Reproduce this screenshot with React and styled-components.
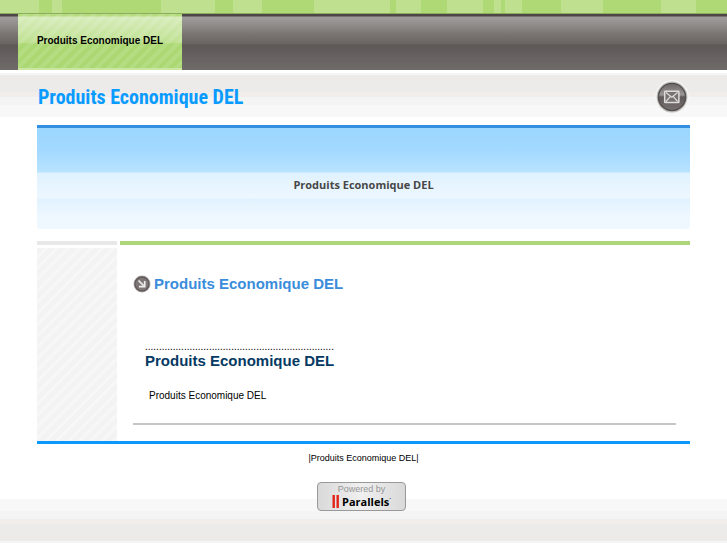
import styled, { createGlobalStyle } from "styled-components";

const siteName = "Produits Economique DEL";
const stripes = [
    [39, 1], [13, 0], [10, 1], [99, 0], [54, 1], [18, 0], [29, 1], [52, 0],
    [76, 1], [6, 0], [25, 1], [26, 0], [36, 1], [11, 0], [7, 1], [4, 0],
    [17, 1], [39, 0], [42, 1], [58, 0], [35, 1], [31, 0],
];

const App = () => {
    return (
        <>
            <GlobalStyle />
            <TopStripes>
                {stripes.map(([size, light], key) => (
                    <Stripe key={key} $size={size} $light={light} />
                ))}
            </TopStripes>
            <Nav>
                <NavLink href="#">{siteName}</NavLink>
            </Nav>
            <Header>
                <SiteTitle>{siteName}</SiteTitle>
                <MailLink href="#contact" aria-label="Contact">
                    <MailIcon />
                </MailLink>
            </Header>
            <Page>
                <Banner>{siteName}</Banner>
                <Columns>
                    <Side />
                    <Content>
                        <PageTitle>
                            <ArrowIcon />
                            {siteName}
                        </PageTitle>
                        <Article>
                            <Dots aria-hidden="true">{".".repeat(68)}</Dots>
                            <ArticleTitle>{siteName}</ArticleTitle>
                            <Text>{siteName}</Text>
                        </Article>
                        <Rule />
                    </Content>
                </Columns>
            </Page>
            <Footer>
                <FooterNav>
                    |<a href="#">{siteName}</a>|
                </FooterNav>
                <Powered href="#parallels">
                    <small>Powered by</small>
                    <Brand>
                        <Bars />
                        Parallels
                        <sup>·</sup>
                    </Brand>
                </Powered>
            </Footer>
        </>
    );
};

const MailIcon = () => (
    <svg width="34" height="34" viewBox="0 0 34 34" aria-hidden="true">
        <defs>
            <linearGradient id="mail" x1="0" y1="0" x2="0" y2="1">
                <stop offset="0" stopColor="#6b6665" />
                <stop offset="0.42" stopColor="#9a9796" />
                <stop offset="0.5" stopColor="#5f5a59" />
                <stop offset="1" stopColor="#77716f" />
            </linearGradient>
        </defs>
        <circle cx="17" cy="17" r="16.8" fill="#f7f6f6" />
        <circle cx="17" cy="17" r="15.4" fill="#c2c0bf" />
        <circle cx="17" cy="17" r="13.6" fill="url(#mail)" stroke="#554f4e" strokeWidth="1.4" />
        <rect x="9.7" y="11.2" width="14.2" height="11.2" rx="0.5" fill="#777271" stroke="#dddcdc" strokeWidth="1.5" />
        <path d="M11 12.5l5.8 4.7 5.8-4.7M11 21.5l4.2-4.8M22.6 21.5l-4.2-4.8" fill="none" stroke="#dddcdc" strokeWidth="1.2" />
    </svg>
);

const ArrowIcon = () => (
    <svg width="18" height="18" viewBox="0 0 18 18" aria-hidden="true">
        <circle cx="9" cy="9" r="8.5" fill="#b3b0b0" />
        <circle cx="9" cy="9" r="7" fill="#7d7877" stroke="#5f5a59" strokeWidth="1.4" />
        <path d="M5.5 5.5l5 5M6 11.7h5.7V6" fill="none" stroke="#eee" strokeWidth="1.7" />
    </svg>
);

const Bars = () => (
    <svg width="8" height="13" viewBox="0 0 8 13" aria-hidden="true">
        <path d="M0.5 0h2.4v13H0.5zM4.5 0h2.4v13H4.5z" fill="#e2231a" />
    </svg>
);

const GlobalStyle = createGlobalStyle`
    body {
        margin: 0;
        background: #fff;
        color: #000;
        font-family: "Liberation Sans", Arial, sans-serif;
        font-size: 10px;
    }

    a {
        color: inherit;
        text-decoration: none;
    }

    svg {
        display: block;
        flex: none;
    }
`;

const TopStripes = styled.div`
    display: flex;
    height: 13px;
    border-bottom: 1px solid #8cac60;
`;

const Stripe = styled.span`
    flex: ${(props) => props.$size} 0 0;
    background: ${(props) => (props.$light ? "#bfe18f" : "#aed975")};
`;

const Nav = styled.nav`
    display: flex;
    height: 56px;
    padding-left: 18px;
    background: linear-gradient(#4d4546 2px, #a09e9c 3px, #8d8a88 12px, #7a7573 20px, #696462 30px, #5d5756 31px, #686362 44px, #6f6b69);
`;

const NavLink = styled.a`
    box-sizing: border-box;
    display: flex;
    align-items: center;
    justify-content: center;
    width: 164px;
    padding-bottom: 2px;
    border-bottom: 2px solid #c9e6a2;
    font-weight: bold;
    background:
        repeating-linear-gradient(135deg, transparent 0 4px, rgba(255, 255, 255, 0.1) 4px 8px),
        linear-gradient(#b4dc7e 2px, #d8ecbc 3px, #bfe192 28px, #acd873 30px);
`;

const Header = styled.header`
    box-sizing: border-box;
    display: flex;
    align-items: center;
    justify-content: space-between;
    height: 44px;
    margin-top: 3px;
    padding: 4px 38px 0;
    background: linear-gradient(#f6f5f5 2px, #edebea 2px 19px, #f0edeb 19px 24px, #f4f4f4 24px 32px, #f8f8f8 32px);
`;

const SiteTitle = styled.h1`
    margin: 0;
    color: #0a9bff;
    font: bold 20px/28px "Roboto Condensed", "Liberation Sans Narrow", sans-serif;
`;

const MailLink = styled.a`
    border-radius: 50%;
`;

const Page = styled.main`
    margin: 8px 37px 0;
    border-bottom: 3px solid #0a98fb;
`;

const Banner = styled.div`
    padding: 49px 16px 36px;
    border-top: 3px solid #348fdf;
    border-radius: 0 0 3px 3px;
    color: #474747;
    font: bold 11px/16px "Open Sans", "Noto Sans", sans-serif;
    text-align: center;
    background: linear-gradient(#9ad7ff, #a3d9ff 22px, #b8e3ff 44px, #e0f2ff 45px, #edf7ff 70px, #e0f2fe 71px, #f0f8ff 90px);
`;

const Columns = styled.div`
    display: grid;
    grid-template-columns: 80px 1fr;
    column-gap: 3px;
    margin-top: 12px;
`;

const Side = styled.aside`
    border-top: 4px solid #e8e8e8;
    padding-top: 3px;
    background: repeating-linear-gradient(135deg, #f3f3f3 0 5px, #f7f7f7 5px 8px) content-box;
`;

const Content = styled.section`
    padding: 29px 14px 16px 13px;
    border-top: 4px solid #add67b;
`;

const PageTitle = styled.h2`
    display: flex;
    align-items: center;
    gap: 3px;
    margin: 0;
    color: #3a8ddb;
    font-size: 15px;
    line-height: 20px;
`;

const Article = styled.div`
    padding: 48px 0 20px 12px;
`;

const Dots = styled.div`
    line-height: 10px;
`;

const ArticleTitle = styled.h3`
    margin: 0;
    color: #063a63;
    font-size: 15px;
    line-height: 18px;
`;

const Text = styled.p`
    margin: 19px 0 0 4px;
    line-height: 14px;
`;

const Rule = styled.hr`
    margin: 0;
    border: 0;
    border-top: 2px solid #c6c6c6;
`;

const Footer = styled.footer`
    display: flex;
    flex-direction: column;
    align-items: center;
    padding: 8px 0 32px;
    background: linear-gradient(#f8f8f8 12px, #f4f4f4 12px 20px, #f0edeb 20px 25px, #edebea 25px 42px, #f6f5f5 42px) bottom / 100% 44px no-repeat;
`;

const FooterNav = styled.div`
    font-size: 9px;
    line-height: 12px;
`;

const Powered = styled.a`
    box-sizing: border-box;
    display: flex;
    flex-direction: column;
    align-items: center;
    width: 89px;
    height: 29px;
    margin: 18px 4px 0 0;
    border: 1px solid #999;
    border-radius: 4px;
    background: linear-gradient(90deg, #d9d9d9, #f0f0f0 50%, #d9d9d9);

    small {
        color: #959595;
        font-size: 9px;
        line-height: 12px;
    }
`;

const Brand = styled.span`
    display: flex;
    align-items: center;
    font: bold 11px/13px "Open Sans", sans-serif;

    svg {
        margin-right: 2px;
    }

    sup {
        font-size: 6px;
        line-height: 6px;
        align-self: flex-start;
    }
`;

export default App;
